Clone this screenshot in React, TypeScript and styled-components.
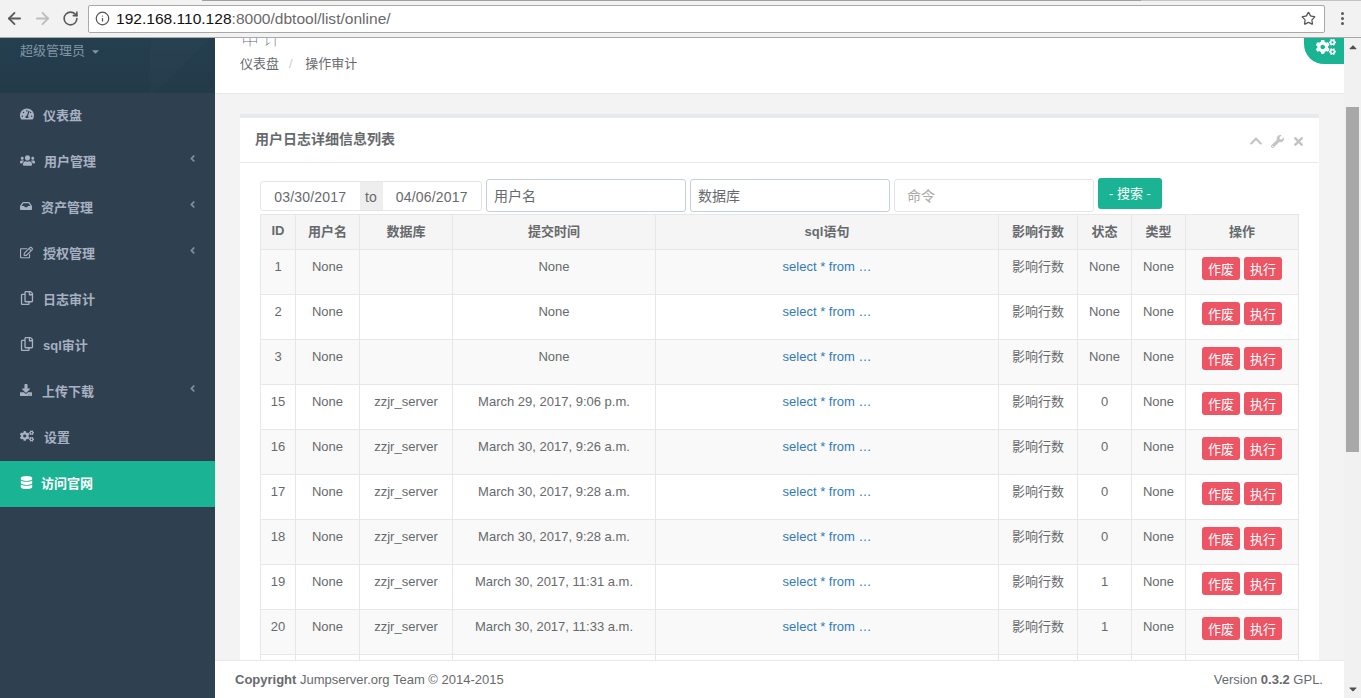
import React from "react";
import styled, { createGlobalStyle } from "styled-components";
import { ArrowLeft, ArrowRight, RotateCw, Info, Star } from "lucide-react";
import {
  FaTachometerAlt, FaUsers, FaInbox, FaRegEdit, FaRegCopy, FaDownload, FaCogs, FaDatabase,
  FaAngleLeft, FaChevronUp, FaWrench, FaTimes, FaCaretDown, FaCaretUp,
} from "react-icons/fa";

const FONT = `"Liberation Sans", Arial, "Noto Sans CJK SC", sans-serif`;

const Global = createGlobalStyle`
  html, body { margin: 0; padding: 0; height: 100%; overflow: hidden; }
  body { font-family: ${FONT}; font-size: 13px; color: #676a6c; background: #f3f3f4; }
  * { box-sizing: border-box; }
`;

const Page = styled.div`
  width: 1361px; height: 698px; display: flex; flex-direction: column; overflow: hidden;
`;
const Toolbar = styled.header`
  height: 38px; flex: none; display: flex; align-items: center; padding: 0;
  background: linear-gradient(to right, #f2f2f2 202px, #a0a0a0 202px, #a0a0a0 1141px, #c4c4c4 1141px) top / 100% 1px no-repeat, #f2f2f2;
  border-bottom: 1px solid #a9a9a9;
`;
const NavButton = styled.button<{ $off?: boolean }>`
  width: 28px; height: 28px; padding: 0; border: 0; background: none; display: flex;
  align-items: center; justify-content: center; color: ${p => (p.$off ? "#bdbdbd" : "#5a5a5a")};
`;
const Address = styled.div`
  width: 1237px; height: 28px; margin-left: 4px; background: #fff; border: 1px solid #a9a9a9; border-radius: 2px;
  display: flex; align-items: center; padding: 0 8px 0 6px; font-size: 15.55px; color: #6a6a6a;
`;
const Host = styled.span` color: #111; margin-left: 6px; `;
const StarSlot = styled.span` margin-left: auto; display: flex; color: #555; `;
const Menu = styled.div`
  width: 3px; margin-left: 16px; display: flex; flex-direction: column; gap: 2px;
  span { width: 3px; height: 3px; background: #5a5a5a; border-radius: 50%; }
`;
const Body = styled.div` flex: 1; display: flex; min-height: 0; `;
const Sidebar = styled.aside` width: 215px; flex: none; background: #2f4050; `;
const Profile = styled.div`
  height: 55px; padding: 4px 0 0 20px; color: #8095a8; line-height: 18px;
  display: flex; align-items: flex-start; gap: 5px;
  background:
    linear-gradient(135deg, rgba(255,255,255,.012) 50%, rgba(0,0,0,0) 50%) 150px 0 / 65px 55px no-repeat,
    linear-gradient(#253f4e, #233a49);
`;
const NavItem = styled.div<{ $active?: boolean }>`
  height: 46px; display: flex; align-items: center; padding: 0 17px 4px 20px; font-weight: 700;
  color: ${p => (p.$active ? "#fff" : "#a7b1c2")};
  background: ${p => (p.$active ? "#1ab394" : "transparent")};
`;
const NavIcon = styled.span<{ $w: number }>`
  width: ${p => p.$w}px; flex: none; display: flex; align-items: center;
`;
const NavArrow = styled.span` margin-left: auto; display: flex; color: #7f8fa3; margin-top: -3px; `;
const Main = styled.main` position: relative; flex: 1; min-width: 0; overflow: hidden; display: flex; flex-direction: column; `;
const Heading = styled.div`
  height: 56px; flex: none; background: #fff; border-bottom: 1px solid #e7eaec; padding-left: 25px; overflow: hidden;
`;
const Title = styled.h2`
  margin: -14px 0 0; font-size: 20px; line-height: 28px; font-weight: 100; color: #5a6a7c; letter-spacing: 2px;
`;
const Crumbs = styled.div` margin-top: 3px; line-height: 18px; `;
const Sep = styled.span` color: #ccc; padding: 0 9px 0 10px; `;
const GearTab = styled.div`
  position: absolute; top: 0; right: 0; width: 40px; height: 26px; background: #1ab394; color: #fff;
  border-radius: 0 0 0 20px; display: flex; justify-content: center; padding-left: 3px;
`;
const Content = styled.div` padding: 20px 25px 0; flex: 1; `;
const Panel = styled.section` width: 1079px; background: #fff; border-top: 4px solid #e7eaec; `;
const PanelTitle = styled.div`
  height: 45px; display: flex; align-items: center; padding: 0 14px 0 15px; border-bottom: 1px solid #e7eaec;
  font-size: 14px; font-weight: 700; color: #676a6c;
`;
const PanelName = styled.span` margin-bottom: 5px; `;
const Tools = styled.div`
  margin-left: auto; margin-top: 2px; display: flex; align-items: center; gap: 8px; color: #c4c4c4;
`;
const PanelBody = styled.div` padding: 15px 20px 0; `;
const Filters = styled.div` display: flex; align-items: flex-start; gap: 4px; height: 36px; `;
const DateRange = styled.div`
  width: 222px; height: 30px; margin-top: 3px; display: flex; border: 1px solid #e5e6e7; border-radius: 3px; font-size: 14px; line-height: 28px; letter-spacing: .2px;
`;
const DateValue = styled.span` flex: 1; text-align: center; padding-top: 1px; `;
const To = styled.span` width: 23px; background: #eee; text-align: center; padding-top: 1px; `;
const Input = styled.input<{ $strong?: boolean }>`
  width: 200px; height: 33px; margin-top: 1px; padding: 0 ${p => (p.$strong ? 7 : 12)}px; font: 14px ${FONT};
  border: 1px solid ${p => (p.$strong ? "#c5cfd8" : "#e5e6e7")}; border-radius: 3px; background: #fff; color: #676a6c;
  &::placeholder { color: ${p => (p.$strong ? "#676a6c" : "#a9a9a9")}; }
`;
const SearchButton = styled.button`
  width: 64px; height: 31px; border: 0; border-radius: 3px; background: #1ab394; color: #fff;
  font: 13px ${FONT}; padding: 0 0 3px;
`;
const Table = styled.table`
  width: 1038px; table-layout: fixed; border-collapse: collapse; color: #676a6c;
`;
const Col = styled.col<{ $w: number }>` width: ${p => p.$w}px; `;
const Th = styled.th`
  height: 35px; padding: 0 8px 3px; border: 1px solid #e7e7e7; background: #f5f5f6; font-weight: 700; text-align: center;
`;
const Row = styled.tr<{ $odd: boolean }>` height: 45px; background: ${p => (p.$odd ? "#f9f9f9" : "#fff")}; `;
const Td = styled.td`
  padding: 8px 4px 0; border: 1px solid #e7e7e7; vertical-align: top; text-align: center; line-height: 18.57px; white-space: nowrap;
`;
const SqlLink = styled.a` color: #337ab7; `;
const Action = styled.button`
  height: 23px; width: 38px; padding: 0; border: 0; border-radius: 3px; background: #ed5565; color: #fff;
  font: 13px ${FONT}; margin: -1px 2px 0;
`;
const Footer = styled.footer`
  position: absolute; left: 0; right: 0; bottom: 0; height: 38px; background: #fff; border-top: 1px solid #e7eaec;
  padding: 0 21px 1px 20px; display: flex; justify-content: space-between; align-items: center;
`;
const Scrollbar = styled.div`
  width: 17px; flex: none; background: #f1f1f1; display: flex; flex-direction: column; align-items: center; justify-content: space-between;
  color: #505050; position: relative; padding: 3px 0;
`;
const Thumb = styled.div`
  position: absolute; left: 2px; top: 69px; width: 13px; height: 345px; background: #a8a8a8;
`;

const nav = [
  { icon: <FaTachometerAlt size={14} />, w: 23, label: "仪表盘" },
  { icon: <FaUsers size={15} />, w: 24, label: "用户管理", arrow: true },
  { icon: <FaInbox size={12} />, w: 21, label: "资产管理", arrow: true },
  { icon: <FaRegEdit size={13} />, w: 23, label: "授权管理", arrow: true },
  { icon: <FaRegCopy size={14} />, w: 23, label: "日志审计" },
  { icon: <FaRegCopy size={14} />, w: 23, label: "sql审计" },
  { icon: <FaDownload size={12} />, w: 22, label: "上传下载", arrow: true },
  { icon: <FaCogs size={14} />, w: 24, label: "设置" },
  { icon: <FaDatabase size={13} />, w: 21, label: "访问官网", active: true },
];

const widths = [35, 64, 93, 203, 343, 79, 54, 54, 113];
const heads = ["ID", "用户名", "数据库", "提交时间", "sql语句", "影响行数", "状态", "类型", "操作"];
const rows = [
  ["1", "None", "", "None", "None", "None"],
  ["2", "None", "", "None", "None", "None"],
  ["3", "None", "", "None", "None", "None"],
  ["15", "None", "zzjr_server", "March 29, 2017, 9:06 p.m.", "0", "None"],
  ["16", "None", "zzjr_server", "March 30, 2017, 9:26 a.m.", "0", "None"],
  ["17", "None", "zzjr_server", "March 30, 2017, 9:28 a.m.", "0", "None"],
  ["18", "None", "zzjr_server", "March 30, 2017, 9:28 a.m.", "0", "None"],
  ["19", "None", "zzjr_server", "March 30, 2017, 11:31 a.m.", "1", "None"],
  ["20", "None", "zzjr_server", "March 30, 2017, 11:33 a.m.", "1", "None"],
];

export default function App() {
  return (
    <Page>
      <Global />
      <Toolbar>
        <NavButton><ArrowLeft size={19} strokeWidth={2.3} /></NavButton>
        <NavButton $off><ArrowRight size={19} strokeWidth={2.3} /></NavButton>
        <NavButton><RotateCw size={17} strokeWidth={2.3} /></NavButton>
        <Address>
          <Info size={15} color="#555" />
          <Host>192.168.110.128</Host>:8000/dbtool/list/online/
          <StarSlot><Star size={15} /></StarSlot>
        </Address>
        <Menu><span /><span /><span /></Menu>
      </Toolbar>
      <Body>
        <Sidebar>
          <Profile>超级管理员 <FaCaretDown size={11} style={{ marginTop: 4 }} /></Profile>
          {nav.map(n => (
            <NavItem key={n.label} $active={n.active}>
              <NavIcon $w={n.w}>{n.icon}</NavIcon>
              {n.label}
              {n.arrow && <NavArrow><FaAngleLeft size={11} /></NavArrow>}
            </NavItem>
          ))}
        </Sidebar>
        <Main>
          <Heading>
            <Title>审计</Title>
            <Crumbs>仪表盘<Sep>/</Sep>&nbsp;操作审计</Crumbs>
          </Heading>
          <GearTab><FaCogs size={20} style={{ marginTop: -1 }} /></GearTab>
          <Content>
            <Panel>
              <PanelTitle>
                <PanelName>用户日志详细信息列表</PanelName>
                <Tools><FaChevronUp size={14} /><FaWrench size={13} /><FaTimes size={13} /></Tools>
              </PanelTitle>
              <PanelBody>
                <Filters>
                  <DateRange>
                    <DateValue>03/30/2017</DateValue><To>to</To><DateValue>04/06/2017</DateValue>
                  </DateRange>
                  <Input $strong placeholder="用户名" />
                  <Input $strong placeholder="数据库" />
                  <Input placeholder="命令" />
                  <SearchButton>- 搜索 -</SearchButton>
                </Filters>
                <Table>
                  <colgroup>{widths.map((w, i) => <Col key={i} $w={w} />)}</colgroup>
                  <thead><tr>{heads.map(h => <Th key={h}>{h}</Th>)}</tr></thead>
                  <tbody>
                    {rows.map((r, i) => (
                      <Row key={r[0]} $odd={i % 2 === 0}>
                        <Td>{r[0]}</Td><Td>{r[1]}</Td><Td>{r[2]}</Td><Td>{r[3]}</Td>
                        <Td><SqlLink>select * from …</SqlLink></Td>
                        <Td>影响行数</Td><Td>{r[4]}</Td><Td>{r[5]}</Td>
                        <Td><Action>作废</Action><Action>执行</Action></Td>
                      </Row>
                    ))}
                    <Row $odd={false}>{widths.map((_, i) => <Td key={i} />)}</Row>
                  </tbody>
                </Table>
              </PanelBody>
            </Panel>
          </Content>
          <Footer>
            <span><b>Copyright</b> Jumpserver.org Team © 2014-2015</span>
            <span>Version <b>0.3.2</b> GPL.</span>
          </Footer>
        </Main>
        <Scrollbar>
          <FaCaretUp size={12} />
          <Thumb />
          <FaCaretDown size={12} />
        </Scrollbar>
      </Body>
    </Page>
  );
}
